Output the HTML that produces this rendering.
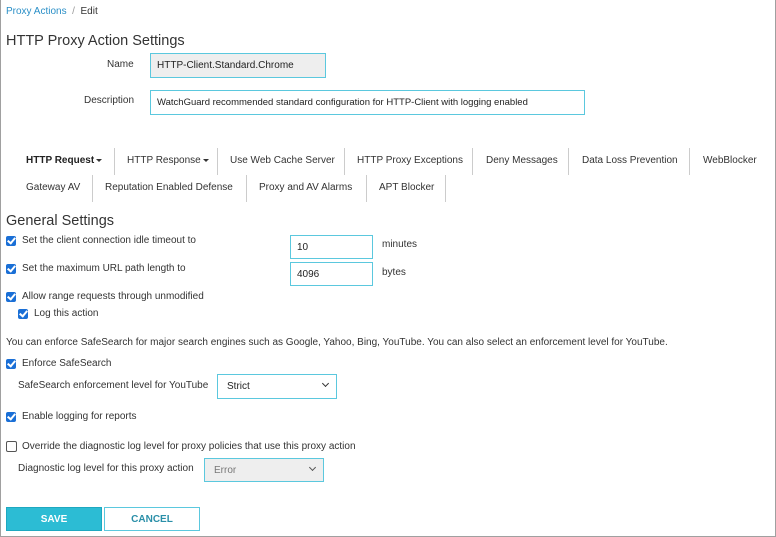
<!DOCTYPE html>
<html><head><meta charset="utf-8"><style>
*{box-sizing:border-box;margin:0;padding:0}
body{width:776px;height:537px;background:#fff;font-family:"Liberation Sans",sans-serif;font-size:10px;color:#333;position:relative;overflow:hidden}
.frame{position:absolute;left:0;top:0;width:776px;height:537px;border:1px solid #a0a0a0;border-top:none}
.a{position:absolute;white-space:nowrap}
.inp{position:absolute;border:1px solid #5bc8de;background:#fff;padding-left:6px;font-size:10px;color:#222;display:flex;align-items:center}
.cb{position:absolute;width:10px;height:10px;background:#1a6fd6;border-radius:2px}
.cb:after{content:"";position:absolute;left:3px;top:0px;width:3px;height:6px;border:solid #fff;border-width:0 2px 2px 0;transform:rotate(40deg)}
.cbo{position:absolute;width:11px;height:11px;border:1px solid #555;border-radius:2px;background:#fff}
.sep{position:absolute;width:1px;background:#ccc}
.car{display:inline-block;border-left:3px solid transparent;border-right:3px solid transparent;border-top:3px solid #333;vertical-align:middle;margin-left:2px}
.sel{position:absolute;border:1px solid #5bc8de;display:flex;align-items:center;padding-left:9px}
.chev{position:absolute;right:8px;top:6px;width:5px;height:5px;border:solid #333;border-width:0 1.5px 1.5px 0;transform:rotate(45deg)}
</style></head><body>
<div class="frame"></div>
<div class="a" style="left:6px;top:6px"><span style="color:#2a8fc7">Proxy Actions</span><span style="color:#999">&nbsp; / &nbsp;</span>Edit</div>
<div class="a" style="left:6px;top:33px;font-size:14.5px;color:#333">HTTP Proxy Action Settings</div>
<div class="a" style="left:107px;top:59px">Name</div>
<div class="inp" style="left:150px;top:53px;width:176px;height:25px;background:#eee">HTTP-Client.Standard.Chrome</div>
<div class="a" style="left:84px;top:95px">Description</div>
<div class="inp" style="left:150px;top:90px;width:435px;height:25px;font-size:9.5px">WatchGuard recommended standard configuration for HTTP-Client with logging enabled</div>

<div class="a" style="left:26px;top:155px;font-weight:bold;color:#222">HTTP Request<span class="car"></span></div>
<div class="sep" style="left:114px;top:148px;height:27px"></div>
<div class="a" style="left:127px;top:155px">HTTP Response<span class="car"></span></div>
<div class="sep" style="left:217px;top:148px;height:27px"></div>
<div class="a" style="left:230px;top:155px">Use Web Cache Server</div>
<div class="sep" style="left:344px;top:148px;height:27px"></div>
<div class="a" style="left:357px;top:155px">HTTP Proxy Exceptions</div>
<div class="sep" style="left:472px;top:148px;height:27px"></div>
<div class="a" style="left:486px;top:155px">Deny Messages</div>
<div class="sep" style="left:568px;top:148px;height:27px"></div>
<div class="a" style="left:582px;top:155px">Data Loss Prevention</div>
<div class="sep" style="left:689px;top:148px;height:27px"></div>
<div class="a" style="left:703px;top:155px">WebBlocker</div>

<div class="a" style="left:26px;top:182px">Gateway AV</div>
<div class="sep" style="left:92px;top:175px;height:27px"></div>
<div class="a" style="left:105px;top:182px">Reputation Enabled Defense</div>
<div class="sep" style="left:246px;top:175px;height:27px"></div>
<div class="a" style="left:259px;top:182px">Proxy and AV Alarms</div>
<div class="sep" style="left:366px;top:175px;height:27px"></div>
<div class="a" style="left:379px;top:182px">APT Blocker</div>
<div class="sep" style="left:445px;top:175px;height:27px"></div>

<div class="a" style="left:6px;top:213px;font-size:14.5px">General Settings</div>
<div class="cb" style="left:6px;top:236px"></div>
<div class="a" style="left:22px;top:235px">Set the client connection idle timeout to</div>
<div class="inp" style="left:290px;top:235px;width:83px;height:24px">10</div>
<div class="a" style="left:382px;top:239px">minutes</div>
<div class="cb" style="left:6px;top:264px"></div>
<div class="a" style="left:22px;top:263px">Set the maximum URL path length to</div>
<div class="inp" style="left:290px;top:262px;width:83px;height:24px">4096</div>
<div class="a" style="left:382px;top:267px">bytes</div>
<div class="cb" style="left:6px;top:292px"></div>
<div class="a" style="left:22px;top:291px">Allow range requests through unmodified</div>
<div class="cb" style="left:18px;top:309px"></div>
<div class="a" style="left:34px;top:308px">Log this action</div>
<div class="a" style="left:6px;top:337px">You can enforce SafeSearch for major search engines such as Google, Yahoo, Bing, YouTube. You can also select an enforcement level for YouTube.</div>
<div class="cb" style="left:6px;top:359px"></div>
<div class="a" style="left:22px;top:358px">Enforce SafeSearch</div>
<div class="a" style="left:18px;top:380px">SafeSearch enforcement level for YouTube</div>
<div class="sel" style="left:217px;top:374px;width:120px;height:25px;color:#222">Strict<span class="chev"></span></div>
<div class="cb" style="left:6px;top:412px"></div>
<div class="a" style="left:22px;top:411px">Enable logging for reports</div>
<div class="cbo" style="left:6px;top:441px"></div>
<div class="a" style="left:22px;top:441px">Override the diagnostic log level for proxy policies that use this proxy action</div>
<div class="a" style="left:18px;top:463px">Diagnostic log level for this proxy action</div>
<div class="sel" style="left:204px;top:458px;width:120px;height:24px;background:#eee;color:#777">Error<span class="chev" style="border-color:#555"></span></div>
<div class="a" style="left:6px;top:507px;width:96px;height:24px;background:#2cbcd4;border:1px solid #1ea8c0;color:#fff;font-weight:bold;font-size:10px;display:flex;align-items:center;justify-content:center">SAVE</div>
<div class="a" style="left:104px;top:507px;width:96px;height:24px;border:1px solid #5bc8de;color:#2a8fa8;font-weight:bold;font-size:10px;display:flex;align-items:center;justify-content:center">CANCEL</div>
</body></html>
